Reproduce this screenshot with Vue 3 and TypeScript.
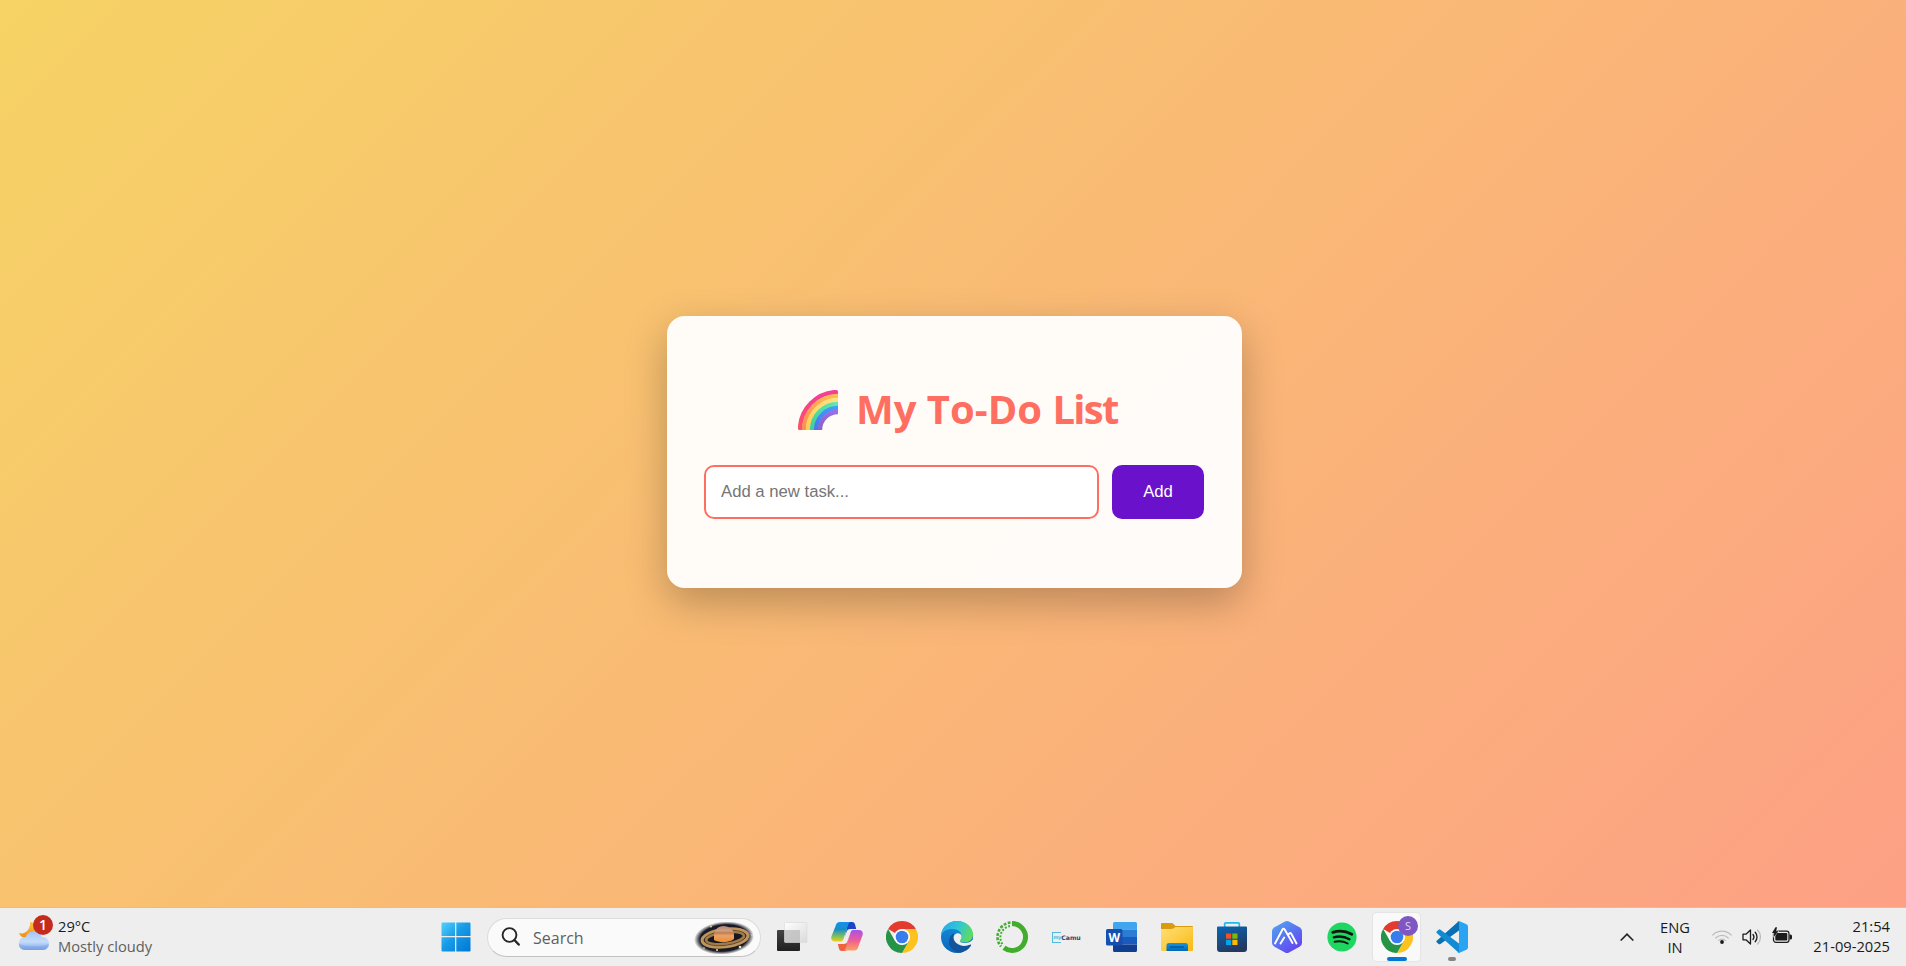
<script setup lang="ts">
import { ref } from 'vue'

const task = ref('')
const rainbow: { r: number; color: string }[] = [
  { r: 38, color: 'url(#rb1)' },
  { r: 34, color: 'url(#rb2)' },
  { r: 30, color: 'url(#rb3)' },
  { r: 26, color: 'url(#rb4)' },
  { r: 22, color: 'url(#rb5)' },
  { r: 18, color: 'url(#rb6)' },
]
</script>

<template>
  <div class="screen">
    <main class="page">
      <section class="card">
        <h1 class="title">
          <svg class="rainbow" width="40" height="40" viewBox="0 0 40 40">
            <defs>
              <linearGradient id="rb1" x1="0" y1="1" x2="1" y2="0"><stop offset="0" stop-color="#fb5462" /><stop offset=".6" stop-color="#f53f95" /></linearGradient>
              <linearGradient id="rb2" x1="0" y1="1" x2="1" y2="0"><stop offset="0" stop-color="#ff8c58" /><stop offset="1" stop-color="#ffc04b" /></linearGradient>
              <linearGradient id="rb3" x1="0" y1="1" x2="1" y2="0"><stop offset="0" stop-color="#ffcf57" /><stop offset="1" stop-color="#ffe289" /></linearGradient>
              <linearGradient id="rb4" x1="0" y1="1" x2="1" y2="0"><stop offset="0" stop-color="#43ce93" /><stop offset="1" stop-color="#62e7ae" /></linearGradient>
              <linearGradient id="rb5" x1="0" y1="1" x2="1" y2="0"><stop offset="0" stop-color="#4777ef" /><stop offset="1" stop-color="#419fff" /></linearGradient>
              <linearGradient id="rb6" x1="0" y1="1" x2="1" y2="0"><stop offset="0" stop-color="#8b62cc" /><stop offset="1" stop-color="#9c70e4" /></linearGradient>
              <clipPath id="rbc"><rect width="40" height="40" rx="1.6" /></clipPath>
            </defs>
            <g fill="none" stroke-width="4.4" clip-path="url(#rbc)">
              <path v-for="b in rainbow" :key="b.r" :d="`M${40 - b.r} 40 A${b.r} ${b.r} 0 0 1 40 ${40 - b.r}`" :stroke="b.color" />
            </g>
          </svg>
          <span class="title-text">My To-Do <span class="title-end">List</span></span>
        </h1>
        <div class="entry">
          <input v-model="task" class="field" type="text" placeholder="Add a new task..." />
          <button class="add" type="button">Add</button>
        </div>
      </section>
    </main>

    <footer class="taskbar">
      <div class="weather">
        <div class="weather-icon">
          <svg width="32" height="28" viewBox="0 0 32 28">
            <defs>
              <linearGradient id="cl" x1="0" y1="0" x2="0" y2="1"><stop offset="0" stop-color="#a3c6f8" /><stop offset=".55" stop-color="#c6dcf9" /><stop offset="1" stop-color="#7ba5ea" /></linearGradient>
              <linearGradient id="mn" x1="0" y1="0" x2="0" y2="1"><stop offset="0" stop-color="#ffc343" /><stop offset="1" stop-color="#ee8b17" /></linearGradient>
            </defs>
            <path d="M12 0c4 0 7 3 7 8s-5 8-10 8C5 16 2 14 1 11c6 2 12-4 11-11z" fill="url(#mn)" />
            <path d="M7 28a5.800 6 0 0 1 0-13h1c.8-3.500 3.700-5.500 8-5.500s7.200 2.200 8 5.500h1a6 6.500 0 0 1 0 13z" fill="url(#cl)" />
            <path d="M1 22c8 3 21 3 30 0 0 4-3 6-6 6H7c-4 0-6-2-6-6z" fill="#6d95df" opacity=".35" />
          </svg>
          <span class="badge">1</span>
        </div>
        <div class="weather-text"><span>29°C</span><span class="muted">Mostly cloudy</span></div>
      </div>

      <nav class="apps">
        <div class="app start">
          <svg width="30" height="30" viewBox="0 0 30 30">
            <defs><linearGradient id="win" x1="0" y1="0" x2="30" y2="30" gradientUnits="userSpaceOnUse"><stop offset="0" stop-color="#53d5ff" /><stop offset=".45" stop-color="#189ce7" /><stop offset="1" stop-color="#0075d4" /></linearGradient></defs>
            <path d="M1.500.500h12.600v13.600H.500V1.500a1 1 0 0 1 1-1zM15.300.500h13.200a1 1 0 0 1 1 1v12.600H15.300zM.500 15.300h13.600v14.200H1.500a1 1 0 0 1-1-1zM15.300 15.300h14.200v13.200a1 1 0 0 1-1 1H15.300z" fill="url(#win)" />
          </svg>
        </div>
        <div class="search">
          <svg class="lens" width="20" height="20" viewBox="0 0 20 20" fill="none" stroke="#262626" stroke-linecap="round"><circle cx="8.500" cy="8" r="6.900" stroke-width="1.900" /><path d="M13.400 13l4.300 4.500" stroke-width="2.500" /></svg>
          <span class="search-text">Search</span>
          <svg class="saturn" width="60" height="32" viewBox="0 0 60 32">
            <defs>
              <radialGradient id="sky"><stop offset="0" stop-color="#14141d" /><stop offset=".8" stop-color="#1a1a24" /><stop offset="1" stop-color="#20202b" stop-opacity="0" /></radialGradient>
              <linearGradient id="planet" x1="0" y1="0" x2="0" y2="1"><stop offset="0" stop-color="#b08775" /><stop offset=".3" stop-color="#d3a080" /><stop offset=".42" stop-color="#bd7d55" /><stop offset=".6" stop-color="#eba265" /><stop offset="1" stop-color="#ec8d2e" /></linearGradient>
            </defs>
            <ellipse cx="30" cy="16" rx="30" ry="16.500" fill="url(#sky)" transform="rotate(-5 30 16)" />
            <g transform="rotate(-7 31 16)" fill="none">
              <ellipse cx="31" cy="16" rx="23" ry="8.800" stroke="#bc945c" stroke-width="3.200" />
              <ellipse cx="31" cy="16" rx="19" ry="6" stroke="#a27b4b" stroke-width="2.800" />
              <ellipse cx="31" cy="16" rx="21" ry="7.400" stroke="#4b3a2b" stroke-width=".6" />
            </g>
            <path d="M20 13.500C20 8 24 4 29.500 4S40 8 40 12.500V17c-5 4-15 4-20 1z" fill="url(#planet)" />
            <g fill="#f5dfb3"><circle cx="17" cy="4.500" r=".9" /><circle cx="10" cy="26" r=".8" /><circle cx="23" cy="28" r="1" /><circle cx="46" cy="25" r="1.300" /><circle cx="58" cy="13" r=".7" /><circle cx="19" cy="2.500" r=".6" /></g>
          </svg>
        </div>

        <div class="app">
          <svg width="32" height="32" viewBox="0 0 32 32">
            <defs><linearGradient id="tv1" x1="0" y1="0" x2="0" y2="1"><stop offset="0" stop-color="#444" /><stop offset="1" stop-color="#202020" /></linearGradient><linearGradient id="tv2" x1="0" y1="0" x2="1" y2="1"><stop offset="0" stop-color="#fff" /><stop offset="1" stop-color="#dadada" /></linearGradient></defs>
            <rect x="1" y="9" width="23" height="21" rx="1" fill="url(#tv1)" /><rect x="8.500" y="1.500" width="22.500" height="20" rx="1" fill="url(#tv2)" stroke="#d8d8d8" stroke-width=".6" /><path d="M8.500 9H24v12.300H8.500z" fill="#b9b9b9" opacity=".75" />
          </svg>
        </div>
        <div class="app">
          <svg width="32" height="32" viewBox="0 0 32 32">
            <defs>
              <linearGradient id="co1" x1="0" y1="0" x2="0" y2="1"><stop offset="0" stop-color="#168ff0" /><stop offset=".38" stop-color="#188fc6" /><stop offset=".72" stop-color="#79be65" /><stop offset="1" stop-color="#f1cf17" /></linearGradient>
              <linearGradient id="co2" x1="0" y1="0" x2="0" y2="1"><stop offset="0" stop-color="#a951ec" /><stop offset=".5" stop-color="#ee5c95" /><stop offset="1" stop-color="#fda15e" /></linearGradient>
            </defs>
            <path d="M17 1h4c2 0 2.700 1.200 3.200 3l1 4h-6c-2 0-3 1-3.700 3L14 16z" fill="#1946c7" />
            <path d="M15 30h-4c-2 0-2.700-1.200-3.200-3l-1-4h6c2 0 3-1 3.700-3l2-7z" fill="#ee6141" />
            <path d="M9 1h11c-2 0-2.700 2-3.300 4l-4.200 13c-.7 2-1.500 2.500-3.500 2.500H4c-3 0-4.300-2-3.600-5L4.600 5C5.400 2 6.500 1 9 1z" fill="url(#co1)" />
            <path d="M23 29.500H12c2 0 2.700-2 3.300-4l4.200-14c.6-2 1.500-2.500 3.500-2.500h5c3 0 4.300 2 3.600 5L27.400 25.500C26.600 28.500 25.500 29.500 23 29.500z" fill="url(#co2)" />
            <path d="M17.500 10h2l-3.800 11.500h-3z" fill="#f1eaf2" />
          </svg>
        </div>
        <div class="app">
          <svg width="32" height="32" viewBox="0 0 48 48"><path d="M24 24L3.215 12A24 24 0 0 1 44.785 12H24z" fill="#e33b2e" /><path d="M24 24L24 12h20.785A24 24 0 0 1 24 48l10.392-18z" fill="#fcc31e" /><path d="M24 24l10.392 6L24 48A24 24 0 0 1 3.215 12l10.393 18z" fill="#269447" /><circle cx="24" cy="24" r="12" fill="#fff" /><circle cx="24" cy="24" r="9.500" fill="#397cec" /></svg>
        </div>
        <div class="app">
          <svg width="32" height="32" viewBox="0 0 32 32">
            <defs><linearGradient id="ed1" x1="0" y1=".3" x2="1" y2=".6"><stop offset="0" stop-color="#2ca9e8" /><stop offset=".5" stop-color="#30c7d6" /><stop offset="1" stop-color="#63dc55" /></linearGradient><linearGradient id="ed2" x1="0" y1="0" x2="0" y2="1"><stop offset="0" stop-color="#168fdd" /><stop offset="1" stop-color="#0b66ba" /></linearGradient></defs>
            <circle cx="16" cy="16" r="16" fill="url(#ed2)" />
            <path d="M0 14C1 5 8 0 16 0c9 0 16 6 16 13.500 0 5-4 8-8.500 8-3 0-4.500-1-4.500-2s1.500-1.500 1.500-4.500C20.500 11 17 8 11.500 8 6 8 2 10 0 14z" fill="url(#ed1)" />
            <path d="M13 12c-3.500 2-5 5-5 9 0 6 4.500 10 10.500 10.800C24 31 28 28 30 24.500c.5-1-.5-1.500-1.200-1C21 27 13 23 12.500 17c0-2 .5-3.500.5-5z" fill="#11539d" />
            <path d="M20.500 15c0-3-5-4-7-1.200C11.800 16 12.500 20 16 22.500c4 3 9 3 13.500 1L32 24v-5.500c-2 2.500-5 3.500-8.500 3.500-3 0-4.500-1-4.500-2s1.500-1.500 1.500-5z" fill="#eee" />
          </svg>
        </div>
        <div class="app">
          <svg width="32" height="32" viewBox="0 0 32 32" fill="none" stroke="#40ae2c"><path d="M16 2.600A13.400 13.400 0 1 1 8 26.700" stroke-width="5" /><path d="M14.500 1.500A14.600 14.600 0 0 0 5 25.500" stroke-width="2.600" stroke-dasharray="2.800 1.500" /><path d="M14 5A11.600 11.600 0 0 0 7.200 24" stroke-width="2" stroke-dasharray="1.900 1.600" /></svg>
        </div>
        <div class="app"><div class="camu"><span class="camu-box">my</span><span>Camu</span></div></div>
        <div class="app">
          <svg width="32" height="32" viewBox="0 0 32 32">
            <path d="M8.500 1h21A1.500 1.500 0 0 1 31 2.500V8.500H7v-6A1.500 1.500 0 0 1 8.500 1z" fill="#41a5ee" /><path d="M7 8.500h24V16H7z" fill="#2b7cd3" /><path d="M7 16h24v7.500H7z" fill="#185abd" /><path d="M7 23.500h24v6A1.500 1.500 0 0 1 29.500 31h-21A1.500 1.500 0 0 1 7 29.500z" fill="#103f91" /><rect y="8" width="16.500" height="16.500" rx="1.500" fill="#174fae" />
            <text x="8.200" y="20.700" text-anchor="middle" class="word-letter">W</text>
          </svg>
        </div>
        <div class="app">
          <svg width="32" height="32" viewBox="0 0 32 32">
            <defs><linearGradient id="fo" x1="0" y1="0" x2="1" y2="1"><stop offset="0" stop-color="#ffe078" /><stop offset="1" stop-color="#f9b911" /></linearGradient><linearGradient id="fb" x1="0" y1="0" x2="0" y2="1"><stop offset="0" stop-color="#1695df" /><stop offset="1" stop-color="#0068b6" /></linearGradient></defs>
            <path d="M1 2h9.500c1 0 1.500.500 2.300 1.300L14.500 5H31a1 1 0 0 1 1 1v7H0V3a1 1 0 0 1 1-1z" fill="#dc9b0c" /><path d="M0 8h9.500c1.500 0 2.500-.3 3.500-1L14.500 6H32V29a1 1 0 0 1-1 1H1a1 1 0 0 1-1-1z" fill="url(#fo)" /><path d="M5.500 30v-5.500a2.500 2.500 0 0 1 2.500-2.500h16.500a2.500 2.500 0 0 1 2.500 2.500V30z" fill="url(#fb)" /><path d="M9 26h14" stroke="#084f8e" stroke-width="1.200" />
          </svg>
        </div>
        <div class="app">
          <svg width="32" height="32" viewBox="0 0 32 32">
            <defs><linearGradient id="st" x1="0" y1="0" x2=".4" y2="1"><stop offset="0" stop-color="#0866b7" /><stop offset="1" stop-color="#24395f" /></linearGradient></defs>
            <path d="M8.700 7V2.800c0-.7.500-1 1-1h12.600c.5 0 1 .3 1 1V7" fill="none" stroke="#20b8ee" stroke-width="1.700" /><path d="M2 5.500h28a1 1 0 0 1 1 1V28a3 3 0 0 1-3 3H4a3 3 0 0 1-3-3V6.500a1 1 0 0 1 1-1z" fill="url(#st)" /><path d="M10 12.500h5.200v5.200H10z" fill="#f25022" /><path d="M16.300 12.500h5.200v5.200h-5.200z" fill="#7fba00" /><path d="M10 18.800h5.200V24H10z" fill="#00a4ef" /><path d="M16.300 18.800h5.200V24h-5.200z" fill="#ffb900" />
          </svg>
        </div>
        <div class="app">
          <svg width="32" height="32" viewBox="0 0 32 32">
            <defs><linearGradient id="hx" x1="0" y1="0" x2=".7" y2="1"><stop offset="0" stop-color="#50aaf0" /><stop offset="1" stop-color="#6243f3" /></linearGradient></defs>
            <path d="M14 .5q2-1 4 0l10.500 5.800Q31 7.800 31 10v12q0 2.200-2.500 3.700L18 31.500q-2 1-4 0L3.500 25.700Q1 24.200 1 22V10q0-2.200 2.500-3.700z" fill="url(#hx)" /><path d="M4 22.500L11.500 8.500q1-1.800 2.200 0L21.500 22M9.500 22.500l3.700-6M17.500 13.500q1.800-3 3.200 0L25.500 22.500" fill="none" stroke="#fff" stroke-width="1.900" stroke-linecap="round" stroke-linejoin="round" />
          </svg>
        </div>
        <div class="app">
          <svg width="32" height="32" viewBox="0 0 32 32"><circle cx="16" cy="16" r="14.600" fill="#1ed760" /><g fill="none" stroke="#101510" stroke-linecap="round"><path d="M6.800 11.300c6.500-1.900 13-1.300 19 2" stroke-width="2.800" /><path d="M7.800 16.300c5.600-1.500 10.700-.9 15.700 1.900" stroke-width="2.300" /><path d="M8.600 20.800c4.800-1.100 9-.6 13.100 1.700" stroke-width="1.900" /></g></svg>
        </div>
        <div class="app active">
          <svg width="32" height="32" viewBox="0 0 48 48"><path d="M24 24L3.215 12A24 24 0 0 1 44.785 12H24z" fill="#e33b2e" /><path d="M24 24L24 12h20.785A24 24 0 0 1 24 48l10.392-18z" fill="#fcc31e" /><path d="M24 24l10.392 6L24 48A24 24 0 0 1 3.215 12l10.393 18z" fill="#269447" /><circle cx="24" cy="24" r="12" fill="#fff" /><circle cx="24" cy="24" r="9.500" fill="#397cec" /></svg>
          <span class="profile">S</span><span class="mark mark-active"></span>
        </div>
        <div class="app">
          <svg width="32" height="32" viewBox="0 0 32 32"><path d="M1 19.500L23 0v9.500L4.500 23q-1 .700-1.900 0L.7 21.300q-.9-.9.300-1.800z" fill="#0871b5" /><path d="M2.600 8.700q.9-.7 1.900 0L23 22.500V32L1 12.200q-1.100-.9-.3-1.800z" fill="#118bd3" /><path d="M23 0l7.500 3.300Q32 4 32 5.500v21q0 1.500-1.500 2.200L23 32q-1 .2-2-.7 2 .7 2-1.300V2q0-2-2-1.300Q22-.2 23 0z" fill="#29a4f2" /></svg>
          <span class="mark"></span>
        </div>
      </nav>

      <div class="tray">
        <svg class="chevron" width="14" height="10" viewBox="0 0 14 10"><path d="M1.200 8L7 2.200 12.800 8" fill="none" stroke="#222" stroke-width="1.700" stroke-linecap="round" /></svg>
        <div class="lang"><span>ENG</span><span>IN</span></div>
        <svg class="wifi" width="20" height="16" viewBox="0 0 20 16" fill="none" stroke="#bdbdbd" stroke-width="1.200" stroke-linecap="round"><path d="M.8 6a13 13 0 0 1 18.400 0M3.700 9a9 9 0 0 1 12.600 0M6.500 11.600a5 5 0 0 1 7 0" /><circle cx="10" cy="13" r="1.900" fill="#1b1b1b" stroke="none" /></svg>
        <svg class="sound" width="20" height="18" viewBox="0 0 20 18" fill="none" stroke="#1b1b1b" stroke-width="1.300" stroke-linecap="round" stroke-linejoin="round"><path d="M1 6.200h3L8.500 2v14L4 11.800H1zM11 6.500a4 4 0 0 1 0 5M13.200 4.300a7 7 0 0 1 0 9.400" /><path d="M15.600 2a10 10 0 0 1 0 14" stroke="#bbb" /></svg>
        <svg class="battery" width="20" height="17" viewBox="0 0 20 17"><rect x="1.500" y="4.200" width="15.500" height="11.100" rx="2.300" fill="none" stroke="#1b1b1b" stroke-width="1.200" /><rect x="3.300" y="6" width="12" height="7.500" rx=".8" fill="#1b1b1b" /><path d="M17.500 7.500h1a1.500 1.500 0 0 1 1.500 1.500v2a1.500 1.500 0 0 1-1.500 1.500h-1z" fill="#1b1b1b" /><path d="M3.500.2L0 6h2.200L1.500 10.200 6.500 4.200H4.200L5 .2z" fill="#1b1b1b" stroke="#eee" stroke-width="1" paint-order="stroke" /></svg>
        <div class="clock"><span>21:54</span><span>21-09-2025</span></div>
      </div>
    </footer>
  </div>
</template>

<style>
body { margin: 0; overflow: hidden; }
</style>

<style scoped>
.screen { width: 100vw; height: 966px; display: flex; flex-direction: column; font-family: "Open Sans", "Noto Sans", sans-serif; overflow: hidden; }
.page { height: 907px; display: flex; justify-content: center; background: linear-gradient(135deg, #f6d365, #fda085); }
.card { box-sizing: border-box; width: 575px; height: 272px; margin: 316px 0 0 3px; padding: 67px 37px 0; border-radius: 18px; background: rgba(255, 255, 255, .95); box-shadow: 0 15px 40px rgba(0, 0, 0, .25); }
.title { display: flex; align-items: center; height: 54px; margin: 0 0 28px; padding-left: 94px; color: #ff6f61; }
.rainbow { flex: none; }
.title-text { margin: 0 0 3px 18px; font-size: 40px; line-height: 54px; white-space: nowrap; }
.title-end { letter-spacing: -1.700px; }
.entry { display: flex; gap: 13px; height: 54px; }
.field { box-sizing: border-box; width: 395px; padding: 0 15px; border: 2px solid #ff6f61; border-radius: 10px; outline: none; background: #fff; font: 16.700px "Liberation Sans", Arial, sans-serif; }
.field::placeholder { color: #757575; }
.add { width: 92px; padding: 0; border: 0; border-radius: 10px; background: #6a11cb; color: #fff; font: 16.700px "Liberation Sans", Arial, sans-serif; }
.taskbar { box-sizing: border-box; height: 59px; flex: none; display: flex; border-top: 1px solid #c5c2c0; background: #eee; color: #1a1a1a; font-size: 14.700px; }
.weather { width: 440px; display: flex; padding-left: 18px; box-sizing: border-box; }
.weather-icon { position: relative; width: 32px; height: 28px; margin-top: 14px; }
.badge { position: absolute; left: 15px; top: -7px; width: 20px; height: 20px; border-radius: 50%; background: #c42b1c; color: #fff; font-size: 14px; font-weight: 600; line-height: 20px; text-align: center; }
.weather-text { display: flex; flex-direction: column; margin: 8px 0 0 8px; line-height: 20px; white-space: nowrap; }
.muted { color: #5e5e5e; }
.apps { display: flex; align-items: center; height: 58px; }
.app { position: relative; width: 47px; height: 48px; margin-right: 8px; display: flex; align-items: center; justify-content: center; flex: none; border-radius: 4px; }
.app svg { display: block; }
.start { width: 32px; margin-right: 15px; }
.search { box-sizing: border-box; width: 274px; height: 39px; margin-right: 7px; display: flex; align-items: center; padding-left: 13px; border: 1px solid #dcdcdc; border-bottom-color: #c2c2c2; border-radius: 20px; background: #fafafa; }
.lens { flex: none; }
.search-text { width: 100px; margin: 1px 0 0 12px; color: #5f5f5f; font-size: 16px; line-height: 20px; }
.saturn { margin: 2px 0 0 61px; flex: none; }
.camu { display: flex; align-items: center; color: #35456b; font: bold 6.200px "DejaVu Sans", sans-serif; }
.camu-box { box-sizing: border-box; width: 9px; height: 11px; border: 1px solid #55b8dd; border-right: 0; color: #55b8dd; font-size: 5px; line-height: 9px; letter-spacing: -.5px; }
.word-letter { fill: #fff; font: bold 12px "Open Sans", sans-serif; }
.active { background: #f9f9f9; box-shadow: 0 0 1px 1px #e4e4e4; }
.profile { position: absolute; right: 2px; top: 3px; width: 20px; height: 20px; border-radius: 50%; background: #7e57c2; color: #e0d6f0; font-size: 11px; line-height: 20px; text-align: center; }
.mark { position: absolute; bottom: 0; left: 20px; width: 8px; height: 4px; border-radius: 2px; background: #858585; }
.mark-active { left: 14px; width: 20px; background: #0078d4; }
.tray { margin-left: auto; display: flex; align-items: center; height: 58px; padding-right: 16px; }
.lang { width: 36px; display: flex; flex-direction: column; align-items: center; margin: 0 0 1px 23px; line-height: 20px; }
.wifi { margin-left: 19px; }
.sound { margin-left: 10px; }
.battery { margin: 0 0 3px 10px; }
.clock { display: flex; flex-direction: column; align-items: flex-end; width: 98px; line-height: 20px; margin-bottom: 3px; white-space: nowrap; }
</style>
